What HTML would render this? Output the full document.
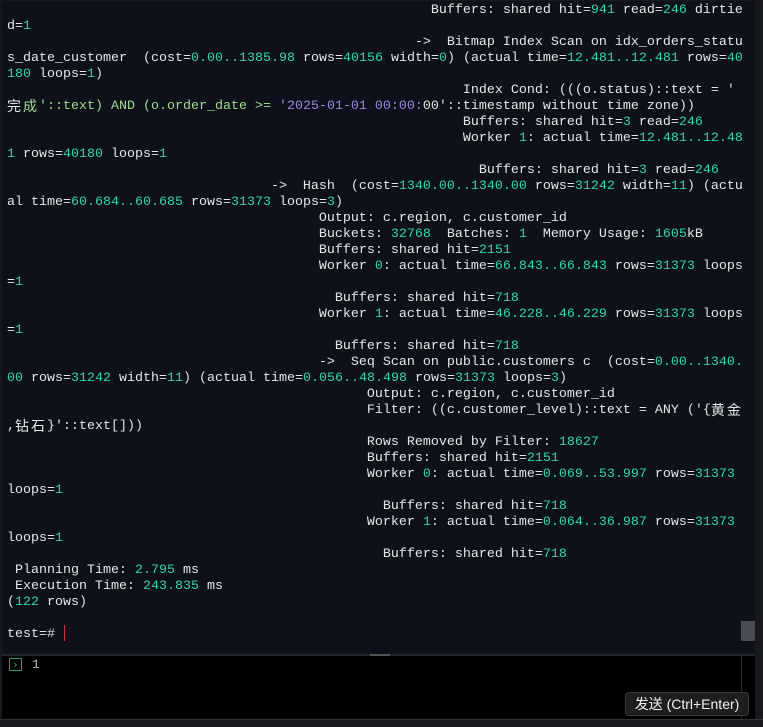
<!DOCTYPE html>
<html><head><meta charset="utf-8"><style>
html,body{margin:0;padding:0;width:763px;height:727px;overflow:hidden;background:#17191d;}
#term{position:absolute;left:2px;top:1px;width:753px;height:653px;background:#0e111a;overflow:hidden;}
pre{margin:0;position:absolute;left:5px;top:2px;font-family:"Liberation Mono",monospace;font-size:13.33px;line-height:16px;color:#e6e6e6;white-space:pre;}
.n{color:#2bd9a3}.s{color:#9b87e0}.g{color:#9bdc8c}
.cjk{font-family:"Noto Sans CJK SC",sans-serif;display:inline-block;width:16px;height:16px;line-height:15px;font-size:14px;vertical-align:top;overflow:visible;}
#thumb{position:absolute;left:739px;top:620px;width:14px;height:20px;background:#4a4c52;}
#cursor{position:absolute;left:62px;top:624px;width:1px;height:16px;background:#c0303a;}
#div{position:absolute;left:2px;top:654px;width:753px;height:2px;background:#23262d;}
#grip{position:absolute;left:370px;top:654px;width:20px;height:2px;background:#555;}
#bot{position:absolute;left:2px;top:656px;width:753px;height:63px;background:#000;}
#vl{position:absolute;left:739px;top:0;width:1px;height:63px;background:#2a2a2a;}
#icon{position:absolute;left:7px;top:2px;width:13px;height:13px;border:1px solid #2fa35a;box-sizing:border-box;color:#2fa35a;font:11px/11px "DejaVu Sans",sans-serif;text-align:center;}
#one{position:absolute;left:30px;top:0px;color:#bbb;font:13px/18px "Liberation Mono",monospace;}
#btn{position:absolute;left:623px;top:36px;width:124px;height:24px;background:#1e1e1e;border:1px solid #3a3a3a;border-radius:4px;box-sizing:border-box;color:#f0f0f0;font:14px/22px "Liberation Sans","Noto Sans CJK SC",sans-serif;text-align:center;}
#bline{position:absolute;left:0;top:719px;width:763px;height:1px;background:#333;}
</style></head><body>
<div id="term"><pre>                                                     Buffers: shared hit=<span class="n">941</span> read=<span class="n">246</span> dirtie
d=<span class="n">1</span>
                                                   ->  Bitmap Index Scan on idx_orders_statu
s_date_customer  (cost=<span class="n">0.00..1385.98</span> rows=<span class="n">40156</span> width=<span class="n">0</span>) (actual time=<span class="n">12.481..12.481</span> rows=<span class="n">40</span>
<span class="n">180</span> loops=<span class="n">1</span>)
                                                         Index Cond: (((o.status)::text = '
<span class="g"><span class="cjk" style="color:#e6e6e6">完</span><span class="cjk">成</span>'::text) AND (o.order_date >= </span><span class="s">'2025-01-01 00:00:</span>00'::timestamp without time zone))
                                                         Buffers: shared hit=<span class="n">3</span> read=<span class="n">246</span>
                                                         Worker <span class="n">1</span>: actual time=<span class="n">12.481..12.48</span>
<span class="n">1</span> rows=<span class="n">40180</span> loops=<span class="n">1</span>
                                                           Buffers: shared hit=<span class="n">3</span> read=<span class="n">246</span>
                                 ->  Hash  (cost=<span class="n">1340.00..1340.00</span> rows=<span class="n">31242</span> width=<span class="n">11</span>) (actu
al time=<span class="n">60.684..60.685</span> rows=<span class="n">31373</span> loops=<span class="n">3</span>)
                                       Output: c.region, c.customer_id
                                       Buckets: <span class="n">32768</span>  Batches: <span class="n">1</span>  Memory Usage: <span class="n">1605</span>kB
                                       Buffers: shared hit=<span class="n">2151</span>
                                       Worker <span class="n">0</span>: actual time=<span class="n">66.843..66.843</span> rows=<span class="n">31373</span> loops
=<span class="n">1</span>
                                         Buffers: shared hit=<span class="n">718</span>
                                       Worker <span class="n">1</span>: actual time=<span class="n">46.228..46.229</span> rows=<span class="n">31373</span> loops
=<span class="n">1</span>
                                         Buffers: shared hit=<span class="n">718</span>
                                       ->  Seq Scan on public.customers c  (cost=<span class="n">0.00..1340.</span>
<span class="n">00</span> rows=<span class="n">31242</span> width=<span class="n">11</span>) (actual time=<span class="n">0.056..48.498</span> rows=<span class="n">31373</span> loops=<span class="n">3</span>)
                                             Output: c.region, c.customer_id
                                             Filter: ((c.customer_level)::text = ANY ('{<span class="cjk">黄</span><span class="cjk">金</span>
,<span class="cjk">钻</span><span class="cjk">石</span>}'::text[]))
                                             Rows Removed by Filter: <span class="n">18627</span>
                                             Buffers: shared hit=<span class="n">2151</span>
                                             Worker <span class="n">0</span>: actual time=<span class="n">0.069..53.997</span> rows=<span class="n">31373</span>
loops=<span class="n">1</span>
                                               Buffers: shared hit=<span class="n">718</span>
                                             Worker <span class="n">1</span>: actual time=<span class="n">0.064..36.987</span> rows=<span class="n">31373</span>
loops=<span class="n">1</span>
                                               Buffers: shared hit=<span class="n">718</span>
 Planning Time: <span class="n">2.795</span> ms
 Execution Time: <span class="n">243.835</span> ms
(<span class="n">122</span> rows)

test=#</pre>
<div id="cursor"></div><div id="thumb"></div></div>
<div id="div"></div><div id="grip"></div>
<div id="bot"><div id="vl"></div><div id="icon">›</div><div id="one">1</div><div id="btn">发送 (Ctrl+Enter)</div></div>
<div id="bline"></div>
</body></html>
